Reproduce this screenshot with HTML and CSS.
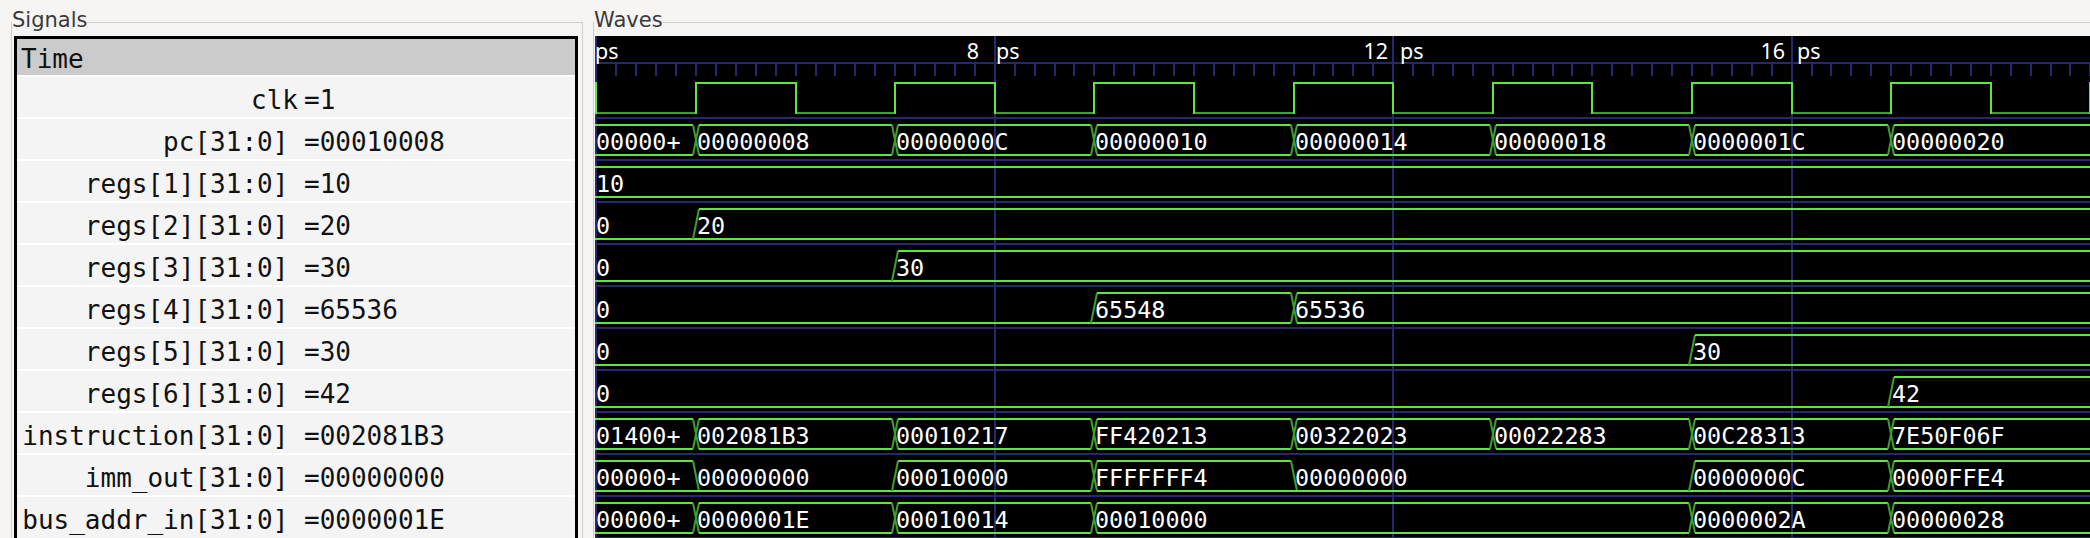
FILE: index.html
```html
<!DOCTYPE html>
<html>
<head>
<meta charset="utf-8">
<title>GTKWave</title>
<link rel="stylesheet" href="styles.css">
</head>
<body>
<div class="app">
  <fieldset class="pane signals">
    <legend>Signals</legend>
    <div class="siglist">
      <div class="sig time">Time</div>
      <div class="sig"><span class="name clk">clk</span><span class="val">=1</span></div>
      <div class="sig"><span class="name">pc[31:0] </span><span class="val">=00010008</span></div>
      <div class="sig"><span class="name">regs[1][31:0] </span><span class="val">=10</span></div>
      <div class="sig"><span class="name">regs[2][31:0] </span><span class="val">=20</span></div>
      <div class="sig"><span class="name">regs[3][31:0] </span><span class="val">=30</span></div>
      <div class="sig"><span class="name">regs[4][31:0] </span><span class="val">=65536</span></div>
      <div class="sig"><span class="name">regs[5][31:0] </span><span class="val">=30</span></div>
      <div class="sig"><span class="name">regs[6][31:0] </span><span class="val">=42</span></div>
      <div class="sig"><span class="name">instruction[31:0] </span><span class="val">=002081B3</span></div>
      <div class="sig"><span class="name">imm_out[31:0] </span><span class="val">=00000000</span></div>
      <div class="sig"><span class="name">bus_addr_in[31:0] </span><span class="val">=0000001E</span></div>
    </div>
  </fieldset>
  <div class="handle"></div>
  <fieldset class="pane waves">
    <legend>Waves</legend>
    <div class="wavecanvas">
      <svg id="wv" class="wavesvg" width="1495" height="502" viewBox="0 0 1495 502"></svg>
    </div>
  </fieldset>
</div>
<script src="waves.js"></script>
</body>
</html>
```

FILE: styles.css
```css
html, body {
  margin: 0;
  padding: 0;
}
body {
  background: #f6f5f4;
  width: 2090px;
  height: 538px;
  overflow: hidden;
  font-family: "DejaVu Sans", sans-serif;
}
.app {
  display: flex;
  height: 538px;
  box-sizing: border-box;
  padding: 8px 0 0 11px;
  overflow: hidden;
}
.pane {
  margin: 0;
  padding: 0;
  min-width: 0;
  border: 1px solid #d2cdc8;
  border-bottom: none;
  height: 600px;
  box-sizing: border-box;
}
.pane legend {
  padding: 0 0 5px 0;
  font-family: "DejaVu Sans", sans-serif;
  font-size: 21px;
  line-height: 24px;
  color: #3a3a3a;
}
.signals {
  width: 572px;
  flex: none;
}
.handle {
  width: 10px;
  flex: none;
}
.waves {
  flex: 1;
  border-right: none;
}
.siglist {
  margin: -1px 0 0 2px;
  width: 564px;
  height: 600px;
  box-sizing: border-box;
  border: 3px solid #000;
  background: #f4f4f4;
}
.sig {
  display: flex;
  height: 42px;
  box-sizing: border-box;
  border-top: 2px solid #ffffff;
  padding: 7px 0 0 4px;
  font-family: "DejaVu Sans Mono", monospace;
  font-size: 26px;
  line-height: 33px;
  color: #111;
  white-space: pre;
}
.sig.time {
  height: 36px;
  border-top: none;
  background: #cbcbcb;
  padding-top: 5px;
  line-height: 31px;
}
.name {
  flex: none;
  width: 283px;
  box-sizing: border-box;
  text-align: right;
}
.name.clk {
  padding-right: 6px;
}
.wavecanvas {
  margin: -1px 0 0 1px;
  height: 510px;
  background: #000;
}
.wavesvg {
  display: block;
  overflow: hidden;
}
.wt {
  fill: #ffffff;
  font-family: "DejaVu Sans Mono", monospace;
  font-size: 23.4px;
}
.rt {
  fill: #ffffff;
  font-family: "Noto Sans", sans-serif;
  font-size: 21.5px;
}
```

FILE: waves.js
```js
(function () {
  var NS = 'http://www.w3.org/2000/svg';
  var svg = document.getElementById('wv');
  var W = 1495, H = 502, OY = 36;
  var BLUE = '#27276f', GREEN = '#5ee63e', DARK = '#3f9f2e';

  function px(t) { return Math.round(101 + (t - 5) * 99.6); }
  function add(name, attrs, text) {
    var e = document.createElementNS(NS, name);
    for (var k in attrs) e.setAttribute(k, attrs[k]);
    if (text != null) e.textContent = text;
    svg.appendChild(e);
    return e;
  }
  function hline(x1, x2, y, c) {
    add('rect', { x: x1, y: y - 1, width: Math.max(0, x2 - x1), height: 2, fill: c });
  }
  function vline(x, y1, y2, c) {
    add('rect', { x: x - 1, y: y1, width: 2, height: y2 - y1, fill: c });
  }
  function diag(x1, y1, x2, y2, c) {
    add('line', { x1: x1, y1: y1, x2: x2, y2: y2, stroke: c, 'stroke-width': 2 });
  }

  add('rect', { x: 0, y: 0, width: 2, height: H, fill: BLUE });
  [8, 12, 16].forEach(function (t) { vline(px(t), 0, H, BLUE); });

  for (var r = 0; r <= 10; r++) {
    add('rect', { x: 0, y: 117 + 42 * r - OY, width: W, height: 2, fill: BLUE });
  }

  add('rect', { x: 0, y: 62 - OY, width: W, height: 2, fill: BLUE });
  for (var k = 1; k < 100; k++) {
    var tx = Math.round(101 + (4 + 0.2 * k - 5) * 99.6);
    if (tx > W) break;
    add('rect', { x: tx - 1, y: 64 - OY, width: 2, height: 12, fill: BLUE });
  }
  var RB = 23;
  add('text', { x: 0, y: RB, 'class': 'rt' }, 'ps');
  add('text', { x: 384, y: RB, 'class': 'rt', 'text-anchor': 'end' }, '8');
  add('text', { x: 401, y: RB, 'class': 'rt' }, 'ps');
  add('text', { x: 793, y: RB, 'class': 'rt', 'text-anchor': 'end' }, '12');
  add('text', { x: 805, y: RB, 'class': 'rt' }, 'ps');
  add('text', { x: 1190, y: RB, 'class': 'rt', 'text-anchor': 'end' }, '16');
  add('text', { x: 1202, y: RB, 'class': 'rt' }, 'ps');

  var HI = 83 - OY, LO = 113 - OY;
  for (var t = 4; t <= 19; t++) {
    var a = Math.max(0, px(t)), b = Math.min(W + 5, px(t + 1));
    if (t % 2 === 1) hline(a, b, HI, GREEN); else hline(a, b, LO, DARK);
    vline(Math.max(1, a), HI - 1, LO + 1, GREEN);
  }

  var rows = [
    [[4, '00000+'], [5, '00000008'], [7, '0000000C'], [9, '00000010'], [11, '00000014'], [13, '00000018'], [15, '0000001C'], [17, '00000020']],
    [[4, '10']],
    [[4, '0'], [5, '20']],
    [[4, '0'], [7, '30']],
    [[4, '0'], [9, '65548'], [11, '65536']],
    [[4, '0'], [15, '30']],
    [[4, '0'], [17, '42']],
    [[4, '01400+'], [5, '002081B3'], [7, '00010217'], [9, 'FF420213'], [11, '00322023'], [13, '00022283'], [15, '00C28313'], [17, '7E50F06F']],
    [[4, '00000+'], [5, '00000000'], [7, '00010000'], [9, 'FFFFFFF4'], [11, '00000000'], [15, '0000000C'], [17, '0000FFE4']],
    [[4, '00000+'], [5, '0000001E'], [7, '00010014'], [9, '00010000'], [15, '0000002A'], [17, '00000028']]
  ];
  function isZero(v) { return /^0+$/.test(v); }

  rows.forEach(function (segs, r) {
    var S = 117 + 42 * r - OY;
    var top = S + 8, bot = S + 38, base = S + 33;
    for (var i = 0; i < segs.length; i++) {
      var first = i === 0, last = i === segs.length - 1;
      var a = first ? 0 : px(segs[i][0]);
      var b = last ? W + 10 : px(segs[i + 1][0]);
      var zero = isZero(segs[i][1]);
      var x1 = first ? 0 : a + 3;
      var x2 = last ? W + 10 : b - 3;
      if (zero) {
        hline(first ? 0 : a - 3, last ? W + 10 : b + 3, bot, GREEN);
      } else {
        hline(x1, x2, top, GREEN);
        hline(x1, x2, bot, GREEN);
      }
      if (!last) {
        var nz = isZero(segs[i + 1][1]);
        if (!zero) diag(b - 3, top, b + 3, bot, DARK);
        if (!nz) diag(b - 3, bot, b + 3, top, DARK);
      }
    }
    for (var j = 0; j < segs.length; j++) {
      var xs = j === 0 ? 1 : px(segs[j][0]) + 1;
      add('text', { x: xs, y: base, 'class': 'wt' }, segs[j][1]);
    }
  });
})();
```
